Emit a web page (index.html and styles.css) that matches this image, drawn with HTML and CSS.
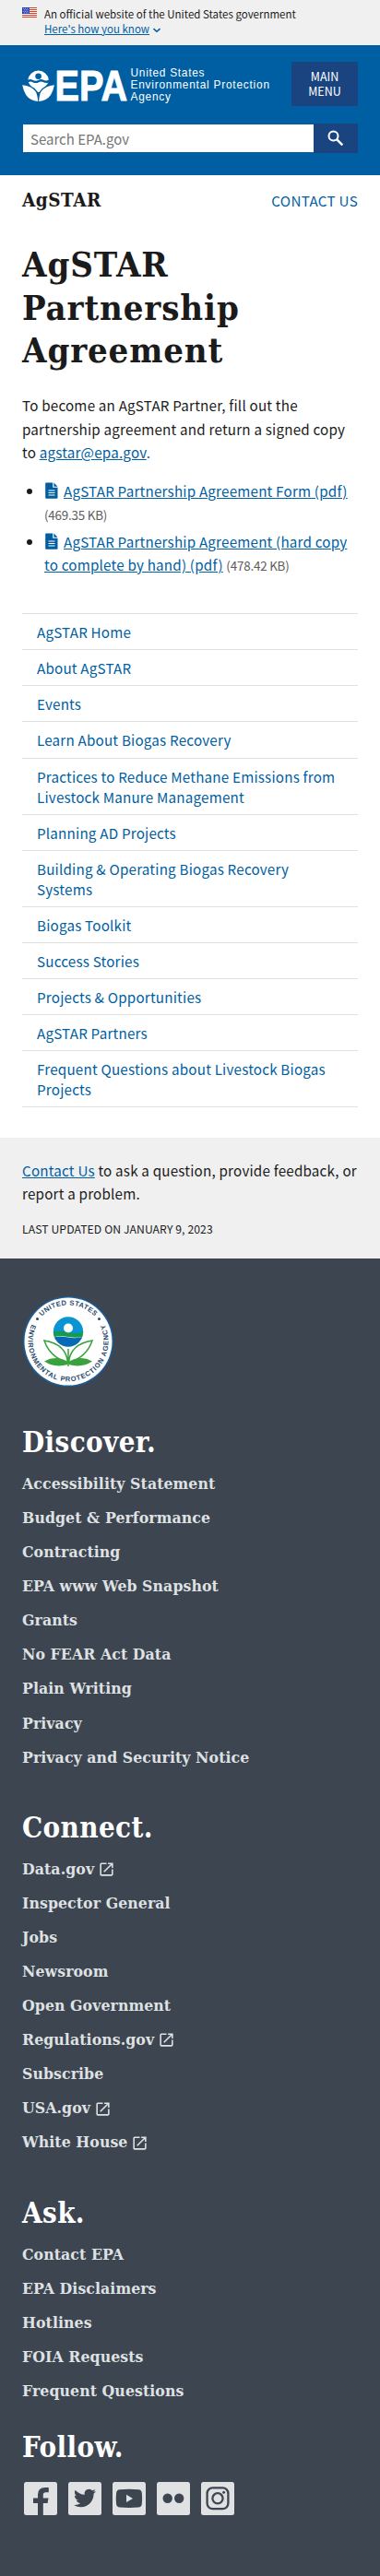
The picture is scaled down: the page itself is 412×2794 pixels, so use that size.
FILE: index.html
```html
<!DOCTYPE html>
<html lang="en">
<head>
<meta charset="utf-8">
<title>AgSTAR Partnership Agreement | US EPA</title>
<link rel="stylesheet" href="styles.css">
</head>
<body>
<svg width="0" height="0" class="defs" aria-hidden="true">
  <symbol id="doc" viewBox="0 0 14 18"><path fill="currentColor" d="M1 .5h7.200v5.300h5.300V17q0 .7-.8.7H1q-.8 0-.8-.7V1.200Q.2.5 1 .5zM9.400.5l4.100 4.200H9.400z"/><path stroke="#fff" stroke-width="1.100" d="M3.500 9h7M3.500 11.500h7M3.500 14h7"/></symbol>
  <symbol id="ext" viewBox="0 0 24 24"><path fill="currentColor" d="M19 19H5V5h7V3H5a2 2 0 0 0-2 2v14a2 2 0 0 0 2 2h14c1.100 0 2-.9 2-2v-7h-2v7zM14 3v2h3.590l-9.830 9.830 1.410 1.410L19 6.410V10h2V3h-7z"/></symbol>
</svg>

<section class="banner">
  <svg class="flag" viewBox="0 0 16 11"><path fill="#fff" d="M0 0h16v11H0z"/><path stroke="#db3e1f" d="M0 .5h16M0 2.500h16M0 4.500h16M0 6.500h16M0 8.500h16M0 10.500h16"/><path fill="#1e33b1" d="M0 0h8v7H0z"/><path stroke="#fff" stroke-width=".8" stroke-dasharray="1 1" d="M.8 1.300h6.500M1.800 2.800h5M.8 4.300h6.500M1.800 5.800h5"/></svg>
  <div class="banner-text">
    <p>An official website of the United States government</p>
    <a href="#"><span>Here's how you know</span><svg viewBox="0 0 10 6"><path d="M1.500 1.200 5 4.300l3.500-3.100" fill="none" stroke="currentColor" stroke-width="1.600"/></svg></a>
  </div>
</section>

<header class="header">
  <div class="header-top">
    <svg class="logo" viewBox="0 -8 270 56">
      <g fill="#fff">
        <path d="M6.300 13.500a11.400 11.400 0 0 1 22.600 0q-3 1.700-5.600.2-2.800-1.500-5.700.2-2.800 1.500-5.700 0-2.800-1.600-5.600-.4z"/>
        <path d="M6.800 16.200q2.400-1.300 5.200.2 2.900 1.400 5.700 0 2.800-1.600 5.600-.1 2.600 1.300 5.200.1-2.200 4.300-6.500 6.300L18.400 27h-1.300l-3.900-4.500q-4.500-2-6.400-6.300z"/>
        <path d="M.2 19.300q10.200 1.200 14.200 6.600 2.200 3 2.800 11Q8.500 36.300 4.200 30 1.400 25.500.2 19.300zM35 19.300q-10.200 1.200-14.200 6.600-2.200 3-2.700 11Q26.700 36.300 31 30q2.800-4.500 4-10.700z"/>
      </g>
      <circle cx="17.600" cy="9.800" r="3.300" fill="#005ea2"/>
      <text class="logo-epa" x="35.500" y="35.500" textLength="78.500" lengthAdjust="spacingAndGlyphs">EPA</text>
      <g class="logo-name">
        <text x="117.500" y="10" textLength="80">United States</text>
        <text x="117.500" y="22.800" textLength="150.500">Environmental Protection</text>
        <text x="117.500" y="35.600" textLength="43.500">Agency</text>
      </g>
    </svg>
    <button class="menu-btn">MAIN<br>MENU</button>
  </div>
  <form class="search">
    <input type="text" placeholder="Search EPA.gov">
    <button type="button" aria-label="Search"><svg viewBox="0 0 18 18"><circle cx="6.500" cy="6.500" r="5" fill="none" stroke="#fff" stroke-width="2"/><path d="m10.300 10.300 6 6" stroke="#fff" stroke-width="2.500"/></svg></button>
  </form>
</header>

<main class="main">
  <div class="site-row"><div class="site-name">AgSTAR</div><a href="#">CONTACT US</a></div>
  <h1>AgSTAR Partnership Agreement</h1>
  <p class="intro">To become an AgSTAR Partner, fill out the<br>partnership agreement and return a signed copy<br>to <a href="#">agstar@epa.gov</a><span class="dot">.</span></p>
  <ul class="files">
    <li><svg class="doc"><use href="#doc"/></svg><a href="#">AgSTAR Partnership Agreement Form (pdf)</a><br><small>(469.35 KB)</small></li>
    <li><svg class="doc"><use href="#doc"/></svg><a href="#">AgSTAR Partnership Agreement (hard copy<br>to complete by hand) (pdf)</a> <small>(478.42 KB)</small></li>
  </ul>
  <nav class="sidenav">
    <a href="#">AgSTAR Home</a>
    <a href="#">About AgSTAR</a>
    <a href="#">Events</a>
    <a href="#">Learn About Biogas Recovery</a>
    <a href="#">Practices to Reduce Methane Emissions from<br>Livestock Manure Management</a>
    <a href="#">Planning AD Projects</a>
    <a href="#">Building &amp; Operating Biogas Recovery<br>Systems</a>
    <a href="#">Biogas Toolkit</a>
    <a href="#">Success Stories</a>
    <a href="#">Projects &amp; Opportunities</a>
    <a href="#">AgSTAR Partners</a>
    <a href="#">Frequent Questions about Livestock Biogas<br>Projects</a>
  </nav>
</main>

<section class="feedback">
  <p><a href="#">Contact Us</a> to ask a question, provide feedback, or<br>report a problem.</p>
  <p class="updated">LAST UPDATED ON JANUARY 9, 2023</p>
</section>

<footer class="footer">
  <svg class="seal" viewBox="0 0 100 100">
    <circle cx="50" cy="50" r="49" fill="#185f9b"/><circle cx="50" cy="50" r="47.500" fill="#fff"/>
    <path id="arc-top" d="M10.500 50a39.500 39.500 0 0 1 79 0" fill="none"/>
    <path id="arc-low" d="M11 30.500A43.500 43.500 0 1 0 89 30.500" fill="none"/>
    <g class="seal-text">
      <text><textPath href="#arc-top" startOffset="50%" text-anchor="middle" textLength="64">UNITED STATES</textPath></text>
      <text><textPath href="#arc-low" startOffset="1" textLength="174">ENVIRONMENTAL PROTECTION AGENCY</textPath></text>
    </g>
    <circle cx="16.500" cy="25.500" r="1.500" fill="#27496b"/><circle cx="83.500" cy="25.500" r="1.500" fill="#27496b"/>
    <clipPath id="globe"><circle cx="50" cy="39.500" r="16.200"/></clipPath>
    <g clip-path="url(#globe)"><path fill="#0b94d4" d="M33 23h34v18H33z"/><path fill="#159b50" d="M33 40q8-2.500 17 0t17-1v6q-9 1.500-17 0t-17 .5z"/><path fill="#0869b5" d="M33 45.500q9-1.500 17 0t17-.5v12H33z"/></g>
    <circle cx="50" cy="35.500" r="5" fill="#fff"/>
    <g fill="none" stroke="#39a23c" stroke-width="1.500"><path d="M50 58v19M49.500 73Q48 53 24 49q6 18 25.500 24zM50.500 73Q52 53 76 49q-6 18-25.500 24z"/></g>
    <path fill="#39a23c" d="M24 71.500q13-7 25.500.5v3Q35 79 24 71.500zm52 0q-13-7-25.500.5v3Q65 79 76 71.500z"/>
  </svg>
  <section class="group">
    <h2>Discover.</h2>
    <ul>
      <li><a href="#">Accessibility Statement</a></li>
      <li><a href="#">Budget &amp; Performance</a></li>
      <li><a href="#">Contracting</a></li>
      <li><a href="#">EPA www Web Snapshot</a></li>
      <li><a href="#">Grants</a></li>
      <li><a href="#">No FEAR Act Data</a></li>
      <li><a href="#">Plain Writing</a></li>
      <li><a href="#">Privacy</a></li>
      <li><a href="#">Privacy and Security Notice</a></li>
    </ul>
  </section>
  <section class="group">
    <h2>Connect.</h2>
    <ul>
      <li><a href="#">Data.gov</a><svg class="ext"><use href="#ext"/></svg></li>
      <li><a href="#">Inspector General</a></li>
      <li><a href="#">Jobs</a></li>
      <li><a href="#">Newsroom</a></li>
      <li><a href="#">Open Government</a></li>
      <li><a href="#">Regulations.gov</a><svg class="ext"><use href="#ext"/></svg></li>
      <li><a href="#">Subscribe</a></li>
      <li><a href="#">USA.gov</a><svg class="ext"><use href="#ext"/></svg></li>
      <li><a href="#">White House</a><svg class="ext"><use href="#ext"/></svg></li>
    </ul>
  </section>
  <section class="group group-last">
    <h2>Ask.</h2>
    <ul>
      <li><a href="#">Contact EPA</a></li>
      <li><a href="#">EPA Disclaimers</a></li>
      <li><a href="#">Hotlines</a></li>
      <li><a href="#">FOIA Requests</a></li>
      <li><a href="#">Frequent Questions</a></li>
    </ul>
  </section>
  <section class="group">
    <h2>Follow.</h2>
    <div class="social">
      <svg viewBox="0 0 36 36"><rect width="36" height="36" rx="2.500"/><path class="ink" d="M15 36V23h-5v-5.500h5v-3.700q0-7.800 8-7.800h3.800v5.200h-3.200q-2.800 0-2.800 2.800v3.500h5.700L25.600 23h-4.800v13z"/></svg>
      <svg viewBox="0 0 36 36"><rect width="36" height="36" rx="2.500"/><path class="ink" transform="translate(6 5.500)" d="M23.953 4.570a10 10 0 0 1-2.825.775 4.958 4.958 0 0 0 2.163-2.723c-.951.555-2.005.959-3.127 1.184a4.920 4.920 0 0 0-8.384 4.482C7.690 8.095 4.067 6.130 1.640 3.162a4.822 4.822 0 0 0-.666 2.475c0 1.710.87 3.213 2.188 4.096a4.904 4.904 0 0 1-2.228-.616v.06a4.923 4.923 0 0 0 3.946 4.827 4.996 4.996 0 0 1-2.212.085 4.936 4.936 0 0 0 4.604 3.417 9.867 9.867 0 0 1-6.102 2.105c-.39 0-.779-.023-1.170-.067a13.995 13.995 0 0 0 7.557 2.209c9.053 0 13.998-7.496 13.998-13.985 0-.21 0-.42-.015-.63A9.935 9.935 0 0 0 24 4.590z"/></svg>
      <svg viewBox="0 0 36 36"><rect width="36" height="36" rx="2.500"/><path class="ink" d="M8 8.300q10-1 20 0 3.500.3 3.800 3.700.7 6 0 12-.4 3.200-3.800 3.500-10 .8-20 0-3.500-.3-3.900-3.500-.7-6 0-12Q4.500 8.600 8 8.300z"/><path d="M15 13.800v8.200l7-4.100z"/></svg>
      <svg viewBox="0 0 36 36"><rect width="36" height="36" rx="2.500"/><circle class="ink" cx="11.700" cy="17.800" r="5.200"/><circle class="ink" cx="24.200" cy="17.800" r="5.200"/></svg>
      <svg viewBox="0 0 36 36"><rect width="36" height="36" rx="2.500"/><g class="line"><rect x="6.600" y="6.400" width="22.800" height="22.800" rx="6"/><circle cx="18" cy="17.800" r="5.600"/></g><circle class="ink" cx="24.600" cy="11.200" r="1.500"/></svg>
    </div>
  </section>
</footer>
</body>
</html>
```
FILE: styles.css
```css
* { box-sizing: border-box; }
body { margin: 0; background: #fff; color: #1b1b1b; font-family: "Noto Sans CJK SC", "Noto Sans", sans-serif; font-size: 15.200px; line-height: 25.400px; }
p, h1, h2, ul { margin: 0; padding: 0; }
a { color: #005ea2; }
svg { display: block; }
.defs { position: absolute; }

.banner { display: flex; gap: 8px; height: 49px; padding: 7px 24px 0; background: #f0f0f0; font-size: 11.500px; line-height: 16px; white-space: nowrap; }
.flag { width: 16px; height: 11px; margin-top: 1px; }
.banner-text a { display: flex; align-items: center; gap: 3px; text-decoration: none; }
.banner-text a span { text-decoration: underline; }
.banner-text a svg { width: 10px; height: 6px; margin-top: 3px; }

.header { height: 141px; padding: 18px 24px 0; background: #005ea2; }
.header-top { display: flex; justify-content: space-between; height: 48px; }
.logo { width: 270px; height: 56px; margin-top: -2px; flex: none; }
.logo-epa { font: bold 47px "Liberation Sans", Arial, sans-serif; fill: #fff; stroke: #fff; stroke-width: 1; }
.logo-name { font: 11.900px "Liberation Sans", Arial, sans-serif; fill: #fff; }
.menu-btn { width: 72px; height: 48px; padding: 0; border: 0; background: #1a4480; color: #fff; font: 12.500px/16px "Noto Sans CJK SC", sans-serif; }
.search { display: flex; height: 32px; margin-top: 19px; }
.search input { flex: 1; min-width: 0; height: 32px; padding: 0 8px; border: 1px solid #005ea2; border-right: 0; background: #fff; font: 15px "Noto Sans CJK SC", sans-serif; }
.search input::placeholder { color: #757575; }
.search button { display: grid; place-items: center; width: 48px; padding: 0; border: 0; background: #1a4480; }
.search button svg { width: 18px; height: 18px; }

.main { height: 1044px; padding: 0 24px; letter-spacing: .2px; white-space: nowrap; }
.site-row { display: flex; justify-content: space-between; align-items: center; height: 56px; }
.site-row a { letter-spacing: .3px; text-decoration: none; }
.site-name, h1, h2, .group li { font-family: "DejaVu Serif Condensed", "DejaVu Serif", serif; font-stretch: condensed; font-weight: bold; }
.site-name { font-size: 20.500px; letter-spacing: .5px; }
h1 { margin-top: 18px; width: 320px; font-size: 38px; line-height: 46.700px; letter-spacing: .85px; white-space: normal; }
.intro { margin-top: 23px; }
.dot { color: #005ea2; }
.files { margin-top: 16.500px; padding-left: 24px; }
.files li { margin-bottom: 4.200px; }
.doc { display: inline-block; width: 14px; height: 18px; margin: 0 6px 0 1px; color: #005ea2; vertical-align: -2px; }
.files small { color: #5c5c5c; font-size: 13.400px; line-height: 1; letter-spacing: -.2px; }
.sidenav { margin-top: 39.700px; border-top: 1px solid #dfe1e2; }
.sidenav a { display: block; padding: 8px 16px; border-bottom: 1px solid #dfe1e2; line-height: 22.050px; text-decoration: none; }

.feedback { height: 131px; padding: 23px 24px 0; background: #f0f0f0; letter-spacing: .2px; white-space: nowrap; }
.updated { margin-top: 13px; font-size: 12.200px; letter-spacing: .08px; }

.footer { height: 1429px; padding: 40px 24px 0; background: #3d4551; }
.seal { width: 100px; height: 100px; }
.seal-text { font: bold 7.500px "Liberation Sans", Arial, sans-serif; fill: #27496b; }
.group { margin-bottom: 35px; }
.seal + .group { margin-top: 37px; }
.group-last { margin-bottom: 20px; }
h2 { height: 49px; color: #fff; font-size: 31px; line-height: 44px; letter-spacing: .4px; }
.group ul { list-style: none; }
.group li { display: flex; align-items: center; height: 37.100px; font-size: 17.500px; letter-spacing: .08px; color: #dfe1e2; white-space: nowrap; }
.group li a { color: #dfe1e2; text-decoration: none; }
.ext { width: 19px; height: 19px; margin-left: 4px; }
.social { display: flex; gap: 12px; padding: 11px 2px 5px; }
.social svg { width: 36px; height: 36px; fill: #dfe1e2; }
.social .ink { fill: #3d4551; }
.social .line { fill: none; stroke: #3d4551; stroke-width: 2.300; }
```
